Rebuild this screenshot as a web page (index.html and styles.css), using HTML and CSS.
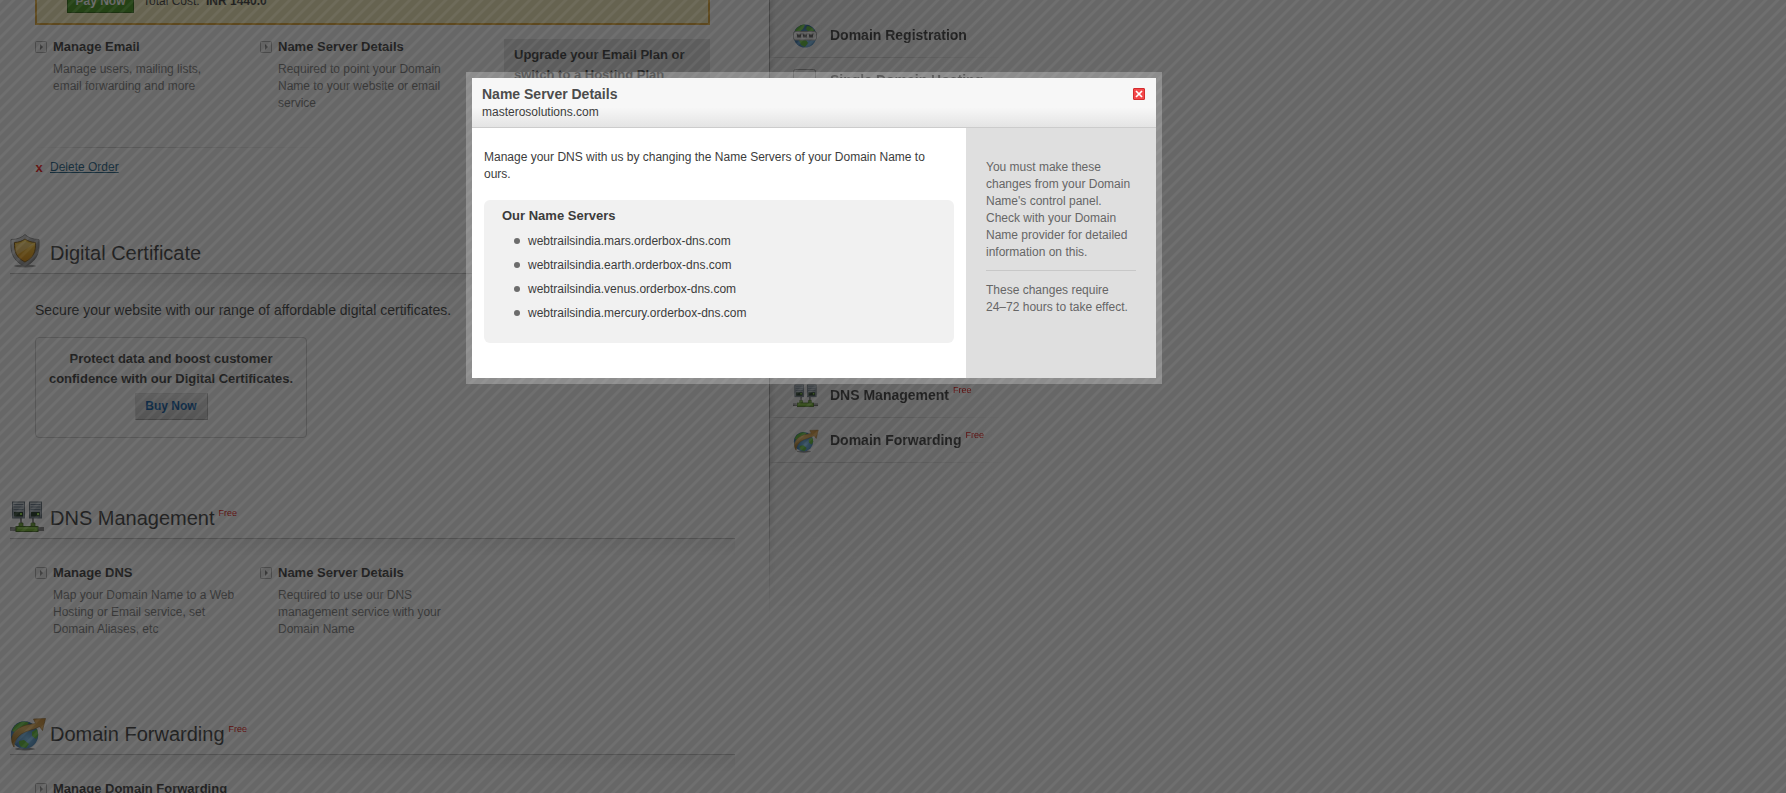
FILE: index.html
```html
<!DOCTYPE html>
<html lang="en">
<head>
<meta charset="utf-8">
<title>Name Server Details</title>
<link rel="stylesheet" href="styles.css">
</head>
<body>
<svg class="defs" aria-hidden="true">
  <defs>
    <linearGradient id="gold" x1="0" y1="0" x2="0" y2="1"><stop offset="0" stop-color="#ffd23c"/><stop offset="1" stop-color="#e08a00"/></linearGradient>
    <linearGradient id="steel" x1="0" y1="0" x2="1" y2="1"><stop offset="0" stop-color="#f4f4f4"/><stop offset="1" stop-color="#666"/></linearGradient>
    <linearGradient id="case" x1="0" y1="0" x2="0" y2="1"><stop offset="0" stop-color="#cfd8de"/><stop offset="1" stop-color="#74828c"/></linearGradient>
    <radialGradient id="sea" cx=".6" cy=".65" r=".6"><stop offset="0" stop-color="#7cc4f4"/><stop offset="1" stop-color="#1d5c96"/></radialGradient>
    <linearGradient id="bronze" x1="0" y1="1" x2="1" y2="0"><stop offset="0" stop-color="#8f5f10"/><stop offset=".5" stop-color="#e8b85c"/><stop offset="1" stop-color="#c98428"/></linearGradient>
    <symbol id="i-arrow" viewBox="0 0 12 12">
      <rect x=".5" y=".5" width="11" height="11" rx="1" fill="#f2f2f2" stroke="#aaa"/>
      <path d="M5 3v6l3-3z" fill="#777"/>
    </symbol>
    <symbol id="i-shield" viewBox="0 0 30 34">
      <ellipse cx="15" cy="32" rx="11" ry="1.5" fill="#999"/>
      <path d="M15 .5c3 3 8 5 14 5 .7 12-1 21-14 27C2 26.500.3 17.500 1 5.500 7 5.500 12 3.500 15 .5z" fill="url(#steel)" stroke="#777" stroke-width=".8"/>
      <path d="M15 5c3 2.300 6.500 3.300 10.500 3.500.3 9-1.500 15-10.500 19.500C6 23.500 4.200 17.500 4.500 8.500 8.500 8.300 12 7.300 15 5z" fill="url(#gold)" stroke="#7a5410"/>
      <path d="M6 10c4-.4 6-1 9-3 3 2 5 2.600 9 3L7 21C6 18 5.800 14 6 10z" fill="#fff" opacity=".28"/>
    </symbol>
    <symbol id="i-server" viewBox="0 0 34 32">
      <path d="M0 27h34M0 29h34" stroke="#5a5a5a" stroke-width="1.300"/>
      <path d="M11 17v8M23 17v8" stroke="#555" stroke-width="1.600"/>
      <path d="M9 22h4v4H9zM21 22h4v4h-4z" fill="#69a82c" stroke="#335f0c" stroke-width=".7"/>
      <rect x="6" y="25.500" width="22" height="5" fill="#69b020" stroke="#335f0c"/>
      <path d="M8 27h18" stroke="#a5dc60"/>
      <g id="unit"><rect x="2.500" y="1" width="12" height="16" fill="url(#case)" stroke="#5c6a75"/>
      <path d="M3.500 3.500h10M3.500 6h10M3.500 8.500h10" stroke="#5f7180"/>
      <rect x="4" y="11" width="9" height="4.500" fill="#16301a"/><rect x="10" y="12" width="2" height="2" fill="#8fe23c"/></g>
      <use href="#unit" x="17"/>
    </symbol>
    <symbol id="i-forward" viewBox="0 0 36 34">
      <ellipse cx="15" cy="32" rx="10" ry="1.500" fill="#888"/>
      <circle cx="14.500" cy="18" r="13.700" fill="url(#sea)"/>
      <path d="M2 14C4 8 9 5 14 4.500l5 1-3 4-6 2-4 4zM22 15l5-3 1.200 6-2.200 4-4-3zM9 24l5-1 5 4-3 4-5-1-2-3z" fill="#55b52c"/>
      <path d="M4 30C-1 23 2 14 12 9.500c5-2.200 9-2.300 13.500-3L23.500 2l12-.5-3 12-3-4C23 13.500 17 13 11.500 17 6 21 4.500 25 4 30z" fill="url(#bronze)" stroke="#8a5c18" stroke-width=".6"/>
    </symbol>
    <symbol id="i-www" viewBox="0 0 24 24">
      <circle cx="12" cy="12" r="11.500" fill="url(#sea)"/>
      <path d="M2 7c2-4 6-6.500 10-6.500L10 5 6 8zM14 2c4 0 7 3 8 6h-6l-3-3zM6 16h7l2 3-3 4-4-2z" fill="#55b52c"/>
      <rect x=".5" y="7.500" width="23" height="8.500" rx="2" fill="#eee" stroke="#999"/>
      <path d="M4 9.500l1 4 1-3 1 3 1-4M10 9.500l1 4 1-3 1 3 1-4M16 9.500l1 4 1-3 1 3 1-4" fill="none" stroke="#222" stroke-width=".8"/>
    </symbol>
    <symbol id="i-host" viewBox="0 0 24 24">
      <rect x=".5" y=".5" width="22" height="22" rx="2" fill="#eee" stroke="#999"/>
      <path d="M4 9l1 3 1-3 1 3 1-3M10 9l1 3 1-3 1 3 1-3M16 9l1 3 1-3 1 3 1-3" fill="none" stroke="#777"/>
    </symbol>
  </defs>
</svg>

<div class="page">
  <main class="main">
    <div class="notice">
      <button class="pay" type="button">Pay Now</button>
      <span>Total Cost: <b class="cost">INR 1440.0</b></span>
    </div>

    <section class="email">
      <ul class="actions">
        <li class="action">
          <svg class="arrow" aria-hidden="true"><use href="#i-arrow"/></svg>
          <div><a class="action-link" href="#">Manage Email</a>
          <p class="desc">Manage users, mailing lists,<br>email forwarding and more</p></div>
        </li>
        <li class="action">
          <svg class="arrow" aria-hidden="true"><use href="#i-arrow"/></svg>
          <div><a class="action-link" href="#">Name Server Details</a>
          <p class="desc">Required to point your Domain Name to your website or email service</p></div>
        </li>
      </ul>
      <div class="upgrade">Upgrade your Email Plan or switch to a Hosting Plan</div>
    </section>
    <div class="delete"><span class="cross">x</span><a class="delete-link" href="#">Delete Order</a></div>

    <section class="section certificate">
      <h2 class="title"><svg class="title-icon" aria-hidden="true"><use href="#i-shield" width="30" height="34"/></svg>Digital Certificate</h2>
      <p class="lead">Secure your website with our range of affordable digital certificates.</p>
      <div class="promo">
        <p class="promo-text">Protect data and boost customer confidence with our Digital Certificates.</p>
        <button class="buy" type="button">Buy Now</button>
      </div>
    </section>

    <section class="section dns">
      <h2 class="title"><svg class="title-icon" aria-hidden="true"><use href="#i-server" width="34" height="32" y="2"/></svg>DNS Management <span class="free">Free</span></h2>
      <ul class="actions">
        <li class="action">
          <svg class="arrow" aria-hidden="true"><use href="#i-arrow"/></svg>
          <div><a class="action-link" href="#">Manage DNS</a>
          <p class="desc">Map your Domain Name to a Web Hosting or Email service, set Domain Aliases, etc</p></div>
        </li>
        <li class="action">
          <svg class="arrow" aria-hidden="true"><use href="#i-arrow"/></svg>
          <div><a class="action-link" href="#">Name Server Details</a>
          <p class="desc">Required to use our DNS management service with your Domain Name</p></div>
        </li>
      </ul>
    </section>

    <section class="section forwarding">
      <h2 class="title"><svg class="title-icon" aria-hidden="true"><use href="#i-forward" width="36" height="34" y="2"/></svg>Domain Forwarding <span class="free">Free</span></h2>
      <ul class="actions">
        <li class="action">
          <svg class="arrow" aria-hidden="true"><use href="#i-arrow"/></svg>
          <a class="action-link" href="#">Manage Domain Forwarding</a>
        </li>
      </ul>
    </section>
  </main>

  <nav class="side">
    <ul class="side-list">
      <li class="side-item"><svg class="side-icon" aria-hidden="true"><use href="#i-www" width="24" height="24"/></svg><a class="side-link" href="#">Domain Registration</a></li>
      <li class="side-item"><svg class="side-icon" aria-hidden="true"><use href="#i-host" width="24" height="24"/></svg><a class="side-link" href="#">Single Domain Hosting</a></li>
    </ul>
    <ul class="side-list side-more">
      <li class="side-item"><svg class="side-icon" aria-hidden="true"><use href="#i-server" width="25" height="24"/></svg><a class="side-link" href="#">DNS Management <span class="free">Free</span></a></li>
      <li class="side-item"><svg class="side-icon" aria-hidden="true"><use href="#i-forward" width="26" height="24"/></svg><a class="side-link" href="#">Domain Forwarding <span class="free">Free</span></a></li>
    </ul>
  </nav>
</div>

<div class="overlay"></div>

<div class="modal" role="dialog" aria-labelledby="modal-title">
  <header class="modal-head">
    <div>
      <h1 class="modal-title" id="modal-title">Name Server Details</h1>
      <p class="modal-domain">masterosolutions.com</p>
    </div>
    <button class="close" type="button" aria-label="Close">
      <svg viewBox="0 0 12 12" class="close-icon"><rect x=".5" y=".5" width="11" height="11" rx=".5" fill="#f4484a" stroke="#d22c2e"/><path d="M3 3l6 6M9 3l-6 6" stroke="#fff" stroke-width="1.700"/></svg>
    </button>
  </header>
  <div class="modal-body">
    <div class="modal-main">
      <p class="modal-text">Manage your DNS with us by changing the Name Servers of your Domain Name to ours.</p>
      <div class="servers">
        <h2 class="servers-title">Our Name Servers</h2>
        <ul class="servers-list">
          <li class="server">webtrailsindia.mars.orderbox-dns.com</li>
          <li class="server">webtrailsindia.earth.orderbox-dns.com</li>
          <li class="server">webtrailsindia.venus.orderbox-dns.com</li>
          <li class="server">webtrailsindia.mercury.orderbox-dns.com</li>
        </ul>
      </div>
    </div>
    <aside class="modal-aside">
      <p class="aside-text">You must make these changes from your Domain Name's control panel. Check with your Domain Name provider for detailed information on this.</p>
      <p class="aside-text">These changes require <span class="hours">24–72</span> hours to take effect.</p>
    </aside>
  </div>
</div>
</body>
</html>
```

FILE: styles.css
```css
* { box-sizing: border-box; }
body {
  margin: 0;
  height: 100vh;
  overflow: hidden;
  background: #fff;
  color: #333;
  font: 12px/17px "Liberation Sans", Arial, sans-serif;
}
h1, h2, p, ul { margin: 0; padding: 0; }
ul { list-style: none; }
a { color: inherit; text-decoration: none; }
button { font: inherit; padding: 0; cursor: pointer; }
.defs { position: absolute; width: 0; height: 0; }

.page { display: flex; align-items: flex-start; }
.main { flex: 0 0 769px; padding: 0 34px 0 10px; }

.notice {
  display: flex;
  align-items: center;
  gap: 9px;
  margin: -22px 25px 0;
  padding: 10px 30px 10px;
  border: 2px solid #e0a52c;
  background: #fbf3bd;
}
.pay {
  width: 67px;
  height: 23px;
  border: 1px solid #226000;
  background: #3c9410;
  color: #fff;
  font-weight: bold;
}
.cost { margin-left: 3px; }

.email { display: flex; justify-content: space-between; height: 122px; padding: 12px 25px 0 0; }
.actions { display: grid; grid-template-columns: 225px 225px; padding-left: 25px; }
.action { display: flex; align-items: flex-start; gap: 6px; }
.arrow { flex: none; width: 12px; height: 12px; margin-top: 4px; }
.action-link { display: block; font-size: 13px; font-weight: bold; line-height: 20px; }
.desc { width: 190px; margin-top: 4px; color: #777; }
.upgrade {
  width: 206px;
  height: 60px;
  margin-top: 2px;
  padding: 6px 10px;
  background: #e2e2e2;
  font-size: 13px;
  font-weight: bold;
  line-height: 20px;
}
.delete {
  display: flex;
  gap: 7px;
  margin: 0 25px 58px;
  padding-top: 12px;
  background: linear-gradient(90deg, transparent, #ccc 25%, transparent) 0 0 / 300px 1px no-repeat;
}
.cross { width: 8px; color: #e00; font-size: 13px; font-weight: bold; text-align: center; }
.delete-link { color: #14597f; text-decoration: underline; }

.title {
  display: flex;
  align-items: center;
  height: 40px;
  border-bottom: 1px solid #bbb;
  font-size: 20px;
  font-weight: normal;
}
.title-icon { flex: none; width: 36px; height: 36px; margin-right: 4px; align-self: flex-start; }
.free { margin: 0 0 12px 4px; color: #e00000; font-size: 9px; font-weight: normal; line-height: 10px; }
.section > .actions, .certificate > .lead { background: linear-gradient(#f0f0f0, #fff0) 0 0 / 100% 18px no-repeat; }
.section > .actions { padding-top: 24px; }
.lead { padding: 26px 0 0 25px; font-size: 14px; line-height: 20px; }
.promo {
  width: 272px;
  margin: 17px 25px 61px;
  padding: 11px 8px 17px;
  border: 1px solid #ccc;
  border-radius: 4px;
  text-align: center;
}
.promo-text { font-size: 13px; font-weight: bold; line-height: 20px; }
.buy {
  display: block;
  width: 73px;
  height: 27px;
  margin: 4px auto 0;
  border: 1px solid #bbb;
  border-color: #ddd #aaa #999 #ddd;
  background: linear-gradient(#e4e4e4, #c8c8c8);
  color: #00539f;
  font-weight: bold;
}
.dns { padding-bottom: 77px; }

.side {
  width: 240px;
  height: 620px;
  border-left: 1px solid #999;
  background: linear-gradient(90deg, #d4d4d4, #eee 6px, #fff);
  -webkit-mask: linear-gradient(#000 75%, transparent);
  mask: linear-gradient(#000 75%, transparent);
}
.side-list { padding-top: 13px; }
.side-more { padding-top: 270px; }
.side-item {
  display: flex;
  align-items: center;
  height: 45px;
  padding-left: 23px;
  gap: 11px;
  background: linear-gradient(90deg, #ccc 40%, transparent) 0 100% / 100% 1px no-repeat;
}
.side-icon { flex: none; width: 26px; height: 24px; }
.side-link { display: flex; align-items: center; font-size: 14px; font-weight: bold; }

.overlay {
  position: fixed;
  inset: 0;
  background:
    linear-gradient(135deg, rgba(255,255,255,.05) 14%, transparent 18% 48%, rgba(255,255,255,.05) 52% 64%, transparent 68% 98%, rgba(255,255,255,.05)) 0 0 / 12px 12px,
    rgba(25,25,25,.66);
}

.modal {
  position: fixed;
  top: 72px;
  left: 466px;
  width: 696px;
  border: 6px solid rgba(255,255,255,.25);
  background: #fff;
  background-clip: padding-box;
  color: #3c3c3c;
}
.modal-head {
  display: flex;
  justify-content: space-between;
  padding: 7px 10px 6px;
  border-bottom: 1px solid #ccc;
  background: linear-gradient(#f7f7f7 60%, #e4e4e4);
}
.modal-title { color: #4c4c4c; font-size: 14px; line-height: 18px; }
.modal-domain { line-height: 18px; }
.close { width: 12px; height: 12px; margin: 3px 1px 0 0; border: 0; background: none; }
.close-icon { display: block; }
.modal-body { display: flex; min-height: 250px; }
.modal-main { flex: 1; padding: 21px 12px 35px; }
.servers {
  margin-top: 17px;
  padding: 6px 18px 18px;
  border-radius: 6px;
  background: #f1f1f1;
}
.servers-title { font-size: 13px; line-height: 20px; }
.servers-list { padding: 3px 0 0 12px; }
.server { display: flex; align-items: center; gap: 8px; line-height: 24px; }
.server::before { content: ""; width: 6px; height: 6px; border-radius: 50%; background: #6c6c6c; }
.modal-aside { flex: 0 0 190px; padding: 31px 20px; background: #dfdfdf; color: #666; }
.aside-text + .aside-text { margin-top: 9px; padding-top: 11px; border-top: 1px solid #c8c8c8; }
.hours { white-space: nowrap; }
```
